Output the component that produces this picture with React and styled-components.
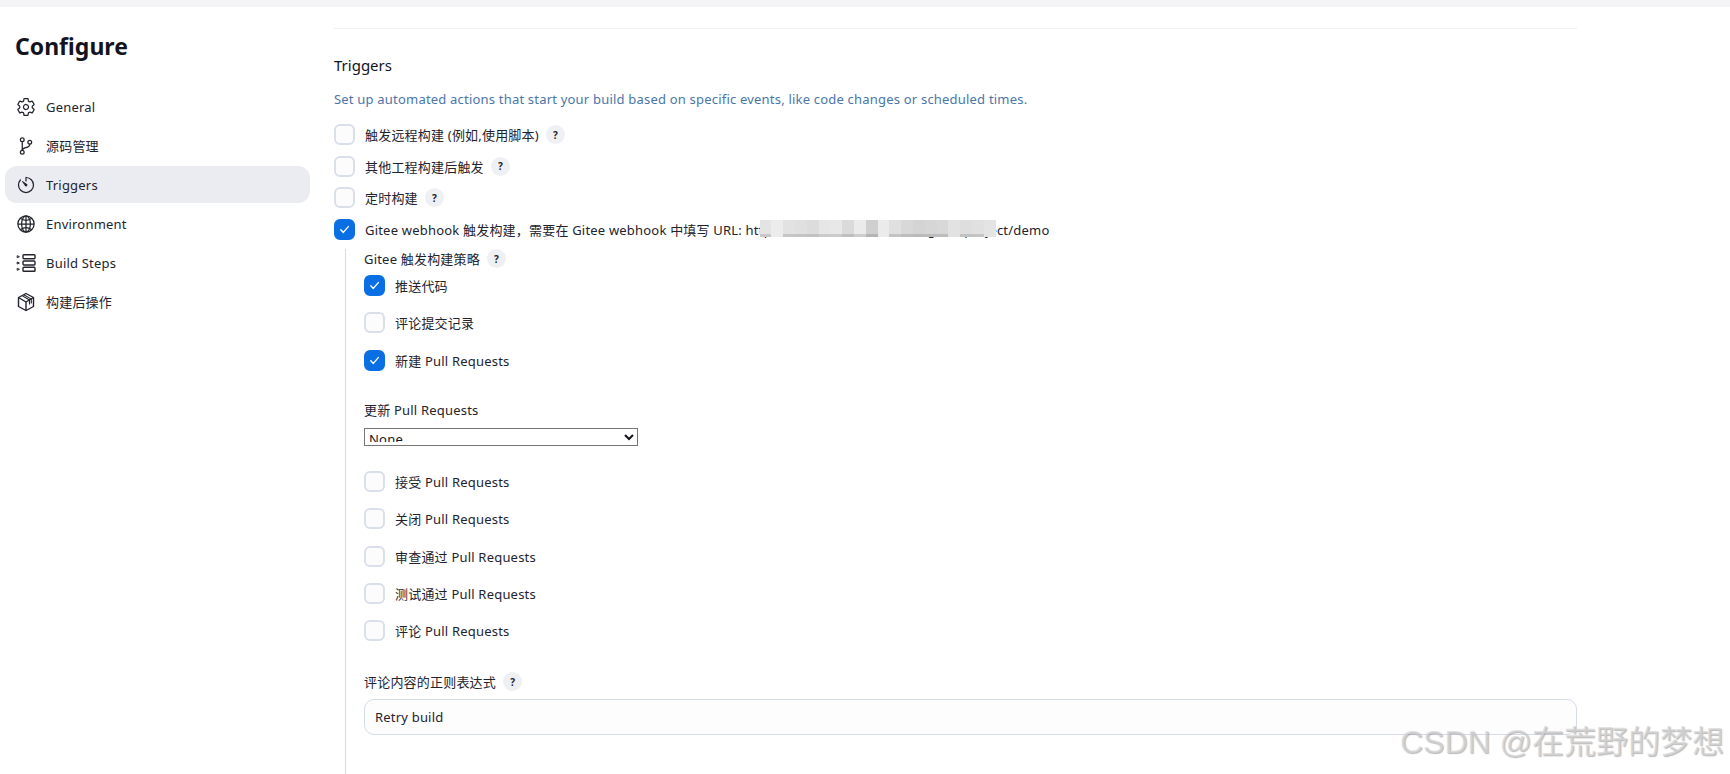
import styled, { createGlobalStyle } from "styled-components";
import { IoSettingsOutline, IoGitBranchOutline, IoTimerOutline, IoGlobeOutline } from "react-icons/io5";

const FONT = `"Noto Sans", "Noto Sans CJK SC", sans-serif`;

const GlobalStyle = createGlobalStyle`
  html, body {
    margin: 0;
    padding: 0;
    background: #fff;
    overflow: hidden;
  }
  * {
    box-sizing: border-box;
  }
`;

function StepsIcon() {
  return (
    <svg width="20" height="20" viewBox="0 0 20 20" fill="none" stroke="currentColor" strokeWidth="1.4">
      <rect x="7" y="1.7" width="12" height="4" rx="0.9" />
      <rect x="7" y="8" width="12" height="4" rx="0.9" />
      <rect x="7" y="14.3" width="12" height="4" rx="0.9" />
      <path d="M1.2 2.7l2.2 1-2.2 1zM1.2 9l2.2 1-2.2 1zM1.2 15.3l2.2 1-2.2 1z" strokeWidth="1" />
    </svg>
  );
}

function PackageIcon() {
  return (
    <svg width="20" height="20" viewBox="0 0 20 20" fill="none" stroke="currentColor" strokeWidth="1.4" strokeLinejoin="round">
      <path d="M10 1.5l7.5 4v9l-7.5 4-7.5-4v-9z" />
      <path d="M2.5 5.5l7.5 4.5 7.5-4.5M10 10v8.5" />
      <path d="M6 3.6l7.5 4.4v4.6M7.8 2.7l7.5 4.4v4.4" strokeWidth="1.1" />
    </svg>
  );
}

function Check() {
  return (
    <svg width="11" height="11" viewBox="0 0 11 11" fill="none" stroke="#fff" strokeWidth="1.4" strokeLinecap="round" strokeLinejoin="round">
      <path d="M1.8 5.8l2.5 2.6 5-5.8" />
    </svg>
  );
}

const navItems = [
  { label: "General", icon: <IoSettingsOutline size={20} /> },
  { label: "源码管理", icon: <IoGitBranchOutline size={20} /> },
  { label: "Triggers", icon: <IoTimerOutline size={20} />, active: true },
  { label: "Environment", icon: <IoGlobeOutline size={20} /> },
  { label: "Build Steps", icon: <StepsIcon /> },
  { label: "构建后操作", icon: <PackageIcon /> },
];

// blurred part of the url, dark flag = a descender smeared along the bottom
const mosaic = [
  ["#e4e4e4", true], ["#ececec"], ["#e2e2e2", true], ["#e0e0e0", true], ["#dcdcdc", true], ["#e6e6e6", true],
  ["#e8e8e8", true], ["#dadada", true], ["#ebebeb", true], ["#cfcfcf", true], ["#ebebeb"], ["#e0e0e0", true],
  ["#d8d8d8", true], ["#d4d4d4", true], ["#d6d6d6", true], ["#d8d8d8", true], ["#e2e2e2"], ["#dedede", true],
  ["#e0e0e0", true], ["#e4e4e4"],
];

function CheckRow({ checked, label, help }) {
  return (
    <Row>
      <Box $checked={checked}>{checked && <Check />}</Box>
      <RowLabel>{label}</RowLabel>
      {help && <Help>?</Help>}
    </Row>
  );
}

export default function App() {
  return (
    <Page>
      <GlobalStyle />
      <TopBar />
      <Layout>
        <Sidebar>
          <Heading>Configure</Heading>
          <Nav>
            {navItems.map((item) => (
              <NavItem key={item.label} $active={item.active}>
                <NavIcon>{item.icon}</NavIcon>
                {item.label}
              </NavItem>
            ))}
          </Nav>
        </Sidebar>
        <Main>
          <Divider />
          <Title>Triggers</Title>
          <Description>
            Set up automated actions that start your build based on specific events, like code changes or scheduled times.
          </Description>
          <TopChecks>
            <CheckRow label="触发远程构建 (例如,使用脚本)" help />
            <CheckRow label="其他工程构建后触发" help />
            <CheckRow label="定时构建" help />
            <Row>
              <Box $checked>
                <Check />
              </Box>
              <RowLabel>
                Gitee webhook 触发构建，需要在 Gitee webhook 中填写 URL: <Url>
                  http://192.168.100.200:8080/gitee/project/demo
                  <Mosaic>
                    {mosaic.map(([color, dark], i) => (
                      <Tile key={i} $color={color} $dark={dark} />
                    ))}
                  </Mosaic>
                </Url>
              </RowLabel>
            </Row>
          </TopChecks>
          <Nested>
            <NestedLabel>
              Gitee 触发构建策略 <Help>?</Help>
            </NestedLabel>
            <Group>
              <CheckRow checked label="推送代码" />
              <CheckRow label="评论提交记录" />
              <CheckRow checked label="新建 Pull Requests" />
            </Group>
            <SelectLabel>更新 Pull Requests</SelectLabel>
            <Select defaultValue="None">
              <option>None</option>
            </Select>
            <Group $top={25}>
              <CheckRow label="接受 Pull Requests" />
              <CheckRow label="关闭 Pull Requests" />
              <CheckRow label="审查通过 Pull Requests" />
              <CheckRow label="测试通过 Pull Requests" />
              <CheckRow label="评论 Pull Requests" />
            </Group>
            <RegexLabel>
              评论内容的正则表达式 <Help>?</Help>
            </RegexLabel>
            <TextInput defaultValue="Retry build" />
          </Nested>
        </Main>
      </Layout>
      <Watermark>CSDN @在荒野的梦想</Watermark>
    </Page>
  );
}

//----- Styled Components

const Page = styled.div`
  position: relative;
  width: 1730px;
  height: 774px;
  overflow: hidden;
  background: #fff;
  color: #14141f;
  font-family: ${FONT};
  letter-spacing: 0.2px;
`;

const TopBar = styled.div`
  height: 7px;
  background: #f4f4f6;
`;

const Layout = styled.div`
  display: flex;
`;

const Sidebar = styled.aside`
  width: 334px;
  flex-shrink: 0;
  padding: 0 24px 0 5px;
`;

const Heading = styled.h1`
  margin: 0;
  padding: 21px 0 0 10px;
  height: 81px;
  font-size: 23px;
  line-height: 36px;
  font-weight: 700;
  letter-spacing: 0;
  color: #14141f;
`;

const Nav = styled.nav`
  display: flex;
  flex-direction: column;
  gap: 2px;
`;

const NavItem = styled.div`
  display: flex;
  align-items: center;
  gap: 10px;
  width: 305px;
  height: 37px;
  padding-left: 11px;
  border-radius: 12px;
  font-size: 13px;
  color: #23232e;
  background: ${(p) => (p.$active ? "#ebecf2" : "transparent")};
`;

const NavIcon = styled.span`
  display: flex;
  width: 20px;
  justify-content: center;
`;

const Main = styled.main`
  width: 1243px;
`;

const Divider = styled.div`
  margin-top: 21px;
  height: 1px;
  background: #f0f1f4;
`;

const Title = styled.h2`
  margin: 25px 0 0;
  font-size: 15px;
  line-height: 22px;
  font-weight: 400;
  letter-spacing: 0;
  color: #14141f;
`;

const Description = styled.p`
  margin: 13px 0 0;
  font-size: 13px;
  line-height: 20px;
  color: #4a76a8;
`;

const TopChecks = styled.div`
  margin-top: 15px;
  display: flex;
  flex-direction: column;
  gap: 10.7px;
`;

const Row = styled.div`
  display: flex;
  align-items: center;
  height: 21px;
  font-size: 13px;
`;

const Box = styled.span`
  display: flex;
  align-items: center;
  justify-content: center;
  width: 21px;
  height: 21px;
  flex-shrink: 0;
  border-radius: 6px;
  border: 2px solid ${(p) => (p.$checked ? "#0b6fe4" : "#d9dfeb")};
  background: ${(p) => (p.$checked ? "#0b6fe4" : "#fcfcfd")};
`;

const RowLabel = styled.span`
  margin-left: 10px;
  white-space: nowrap;
  color: #23232e;
`;

const Url = styled.span`
  position: relative;
`;

const Mosaic = styled.span`
  position: absolute;
  left: 14px;
  top: -1px;
  width: 236px;
  height: 17px;
  display: flex;
`;

const Tile = styled.span`
  flex: 1;
  background: ${(p) => p.$color};
  box-shadow: ${(p) => (p.$dark ? "inset 0 -3px 0 rgba(0, 0, 0, 0.12)" : "none")};
`;

const Help = styled.span`
  display: inline-flex;
  align-items: center;
  justify-content: center;
  width: 19px;
  height: 19px;
  margin-left: 7px;
  border-radius: 50%;
  background: #eef0f4;
  font-size: 10px;
  font-weight: 700;
  letter-spacing: 0;
  color: #23232e;
`;

const Nested = styled.div`
  margin: 9px 0 0 11px;
  padding: 0 0 60px 18px;
  border-left: 1px solid #d5dbe9;
  height: 600px;
`;

const NestedLabel = styled.div`
  display: flex;
  align-items: center;
  height: 19px;
  font-size: 13px;
  color: #23232e;
`;

const Group = styled.div`
  margin-top: ${(p) => p.$top || 7}px;
  display: flex;
  flex-direction: column;
  gap: 16.4px;
`;

const SelectLabel = styled.div`
  margin-top: 30px;
  font-size: 13px;
  line-height: 18px;
  color: #23232e;
`;

const Select = styled.select`
  display: block;
  margin-top: 9px;
  width: 274px;
  height: 18px;
  padding: 0 0 3px;
  border: 1px solid #767676;
  border-radius: 0;
  background: #fff;
  font-family: ${FONT};
  font-size: 13px;
  line-height: 14px;
  letter-spacing: 0.2px;
  color: #14141f;
`;

const RegexLabel = styled.div`
  display: flex;
  align-items: center;
  margin-top: 31px;
  height: 19px;
  font-size: 13px;
  color: #23232e;
`;

const TextInput = styled.input`
  display: block;
  margin-top: 8px;
  width: 1213px;
  height: 36px;
  padding: 0 10px;
  border: 1px solid #d5dbe9;
  border-radius: 10px;
  background: #fdfdfe;
  font-family: ${FONT};
  font-size: 13px;
  letter-spacing: 0.2px;
  color: #23232e;
  outline: none;
`;

const Watermark = styled.div`
  position: absolute;
  left: 1400px;
  top: 722px;
  font-family: "Liberation Sans", "Noto Sans CJK SC", sans-serif;
  font-size: 32px;
  line-height: 40px;
  letter-spacing: 0;
  white-space: nowrap;
  color: rgba(215, 215, 215, 0.7);
  text-shadow: 1px 1px 1px rgba(120, 120, 120, 0.5);
`;
